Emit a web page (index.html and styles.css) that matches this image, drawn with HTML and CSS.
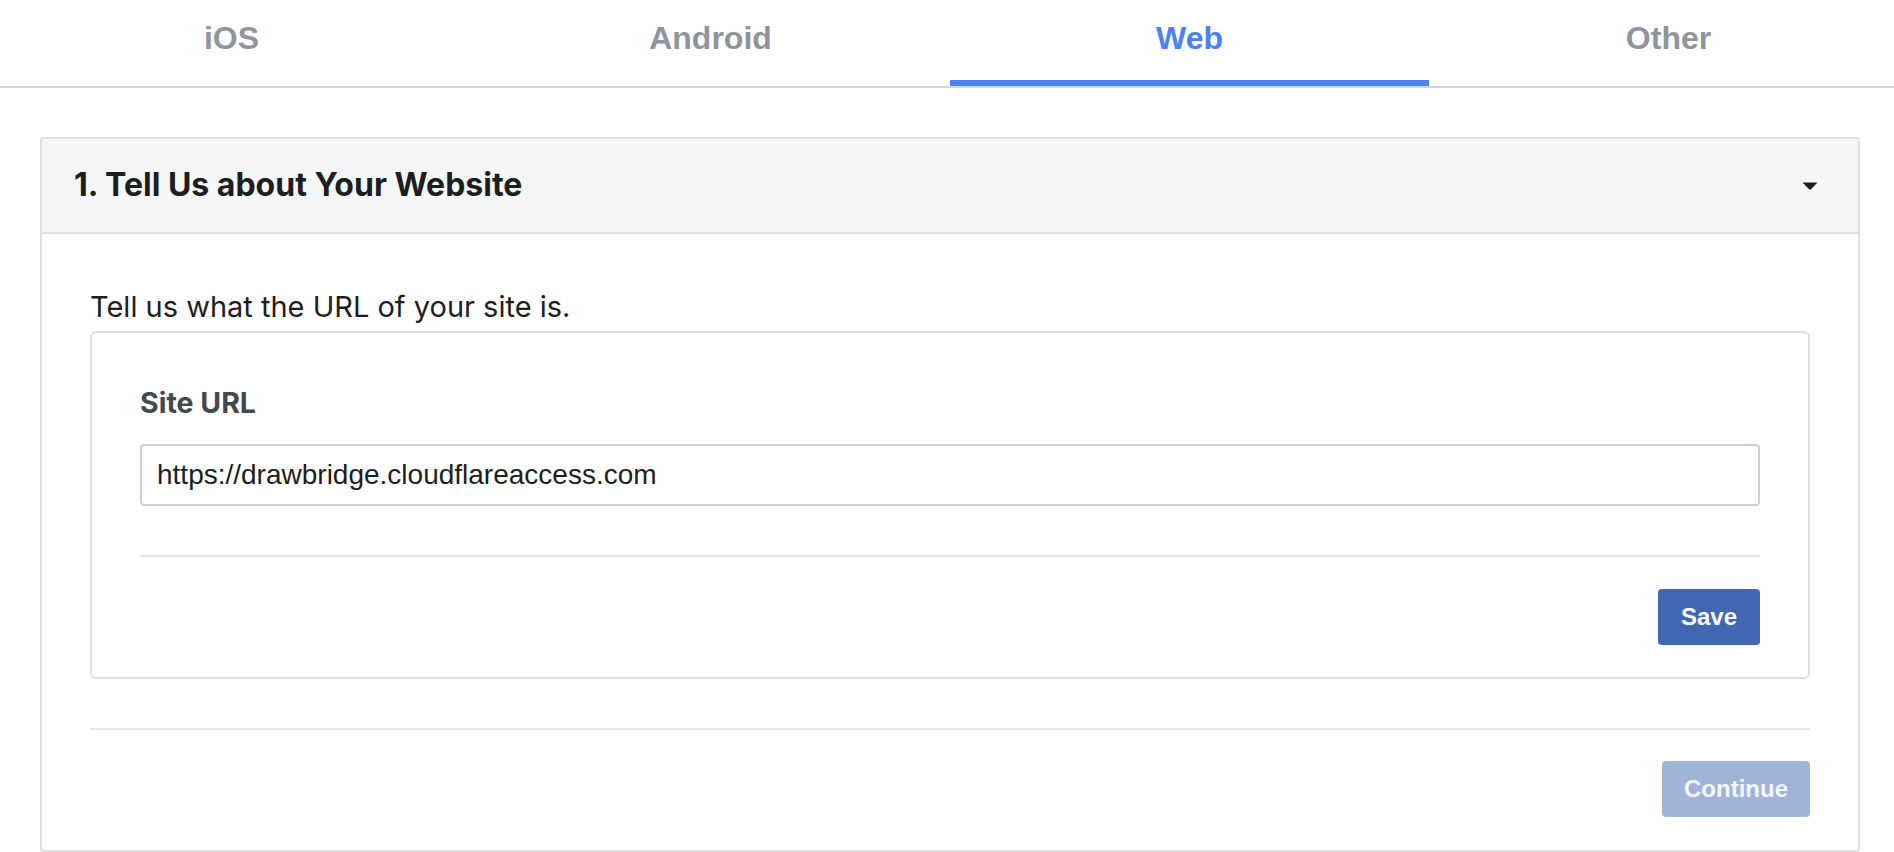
FILE: index.html
```html
<!DOCTYPE html>
<html lang="en">
<head>
<meta charset="utf-8">
<title>Quickstart - Web</title>
<link rel="stylesheet" href="styles.css">
</head>
<body>
<nav class="tabs">
  <div class="tab">iOS</div>
  <div class="tab">Android</div>
  <div class="tab tab-active">Web</div>
  <div class="tab">Other</div>
</nav>
<main class="page">
  <section class="card">
    <header class="card-header">
      <h2 class="card-title">1. Tell Us about Your Website</h2>
      <svg class="caret" width="16" height="8" viewBox="0 0 16 8" aria-hidden="true">
        <path d="M0.5 0.5 H15.5 L9 7.2 Q8 8.1 7 7.2 Z" fill="#1c1e21"/>
      </svg>
    </header>
    <div class="card-body">
      <p class="desc">Tell us what the URL of your site is.</p>
      <div class="form-box">
        <label class="field-label" for="site-url">Site URL</label>
        <input class="field-input" id="site-url" type="text" value="https://drawbridge.cloudflareaccess.com">
        <hr class="divider">
        <div class="actions">
          <button class="btn btn-primary" type="button">Save</button>
        </div>
      </div>
      <hr class="divider divider-outer">
      <div class="actions">
        <button class="btn btn-disabled" type="button">Continue</button>
      </div>
    </div>
  </section>
</main>
</body>
</html>
```
FILE: styles.css
```css
html, body {
  margin: 0;
  padding: 0;
  background: #ffffff;
  overflow-x: hidden;
}

body {
  font-family: Inter, "Noto Sans", "Liberation Sans", sans-serif;
  color: #1c1e21;
}

.tabs {
  display: flex;
  margin: 0 -14px 0 -8px;
  border-bottom: 2px solid #d4d5d9;
}

.tab {
  flex: 1;
  box-sizing: border-box;
  height: 86px;
  padding-top: 18px;
  text-align: center;
  font-family: "Liberation Sans", Arial, sans-serif;
  font-weight: bold;
  font-size: 32px;
  line-height: 40px;
  color: #90949c;
  border-bottom: 6px solid transparent;
}

.tab-active {
  color: #4a82f5;
  border-bottom-color: #4a82f5;
}

.page {
  padding: 49px 34px 0 40px;
}

.card {
  border: 2px solid #dddfe2;
  border-radius: 4px;
  background: #ffffff;
}

.card-header {
  display: flex;
  align-items: center;
  justify-content: space-between;
  height: 93px;
  padding: 0 40px 0 32px;
  background: #f5f6f7;
  border-bottom: 2px solid #dddfe2;
  border-radius: 4px 4px 0 0;
}

.card-title {
  margin: 0 0 2px 0;
  font-size: 32px;
  line-height: 38px;
  font-weight: 700;
  color: #1c1e21;
}

.caret {
  display: block;
}

.card-body {
  padding: 55px 48px 33px 48px;
}

.desc {
  margin: 0 0 6px 0;
  font-size: 29px;
  line-height: 36px;
  color: #1c1e21;
}

.form-box {
  border: 2px solid #dddfe2;
  border-radius: 6px;
  padding: 53px 48px 32px 48px;
}

.field-label {
  display: block;
  font-size: 28.5px;
  line-height: 34px;
  font-weight: 700;
  color: #444950;
  margin-bottom: 24px;
}

.field-input {
  display: block;
  box-sizing: border-box;
  width: 100%;
  height: 62px;
  margin: 0;
  padding: 0 15px;
  border: 2px solid #ccd0d5;
  border-radius: 4px;
  font-family: "Liberation Sans", Arial, sans-serif;
  font-size: 28px;
  color: #1c1e21;
  background: #ffffff;
  outline: none;
}

.divider {
  margin: 49px 0 32px 0;
  border: 0;
  height: 2px;
  background: #e5e6ea;
}

.divider-outer {
  margin: 49px 0 31px 0;
}

.actions {
  display: flex;
  justify-content: flex-end;
}

.btn {
  height: 56px;
  padding: 0 22px;
  border: 0;
  border-radius: 4px;
  font-family: "Liberation Sans", Arial, sans-serif;
  font-weight: bold;
  font-size: 24px;
  cursor: pointer;
}

.btn-primary {
  background: #4267b2;
  color: #ffffff;
  padding: 0 23px;
}

.btn-disabled {
  background: #a1b4d7;
  color: #f2f5fa;
}
```
